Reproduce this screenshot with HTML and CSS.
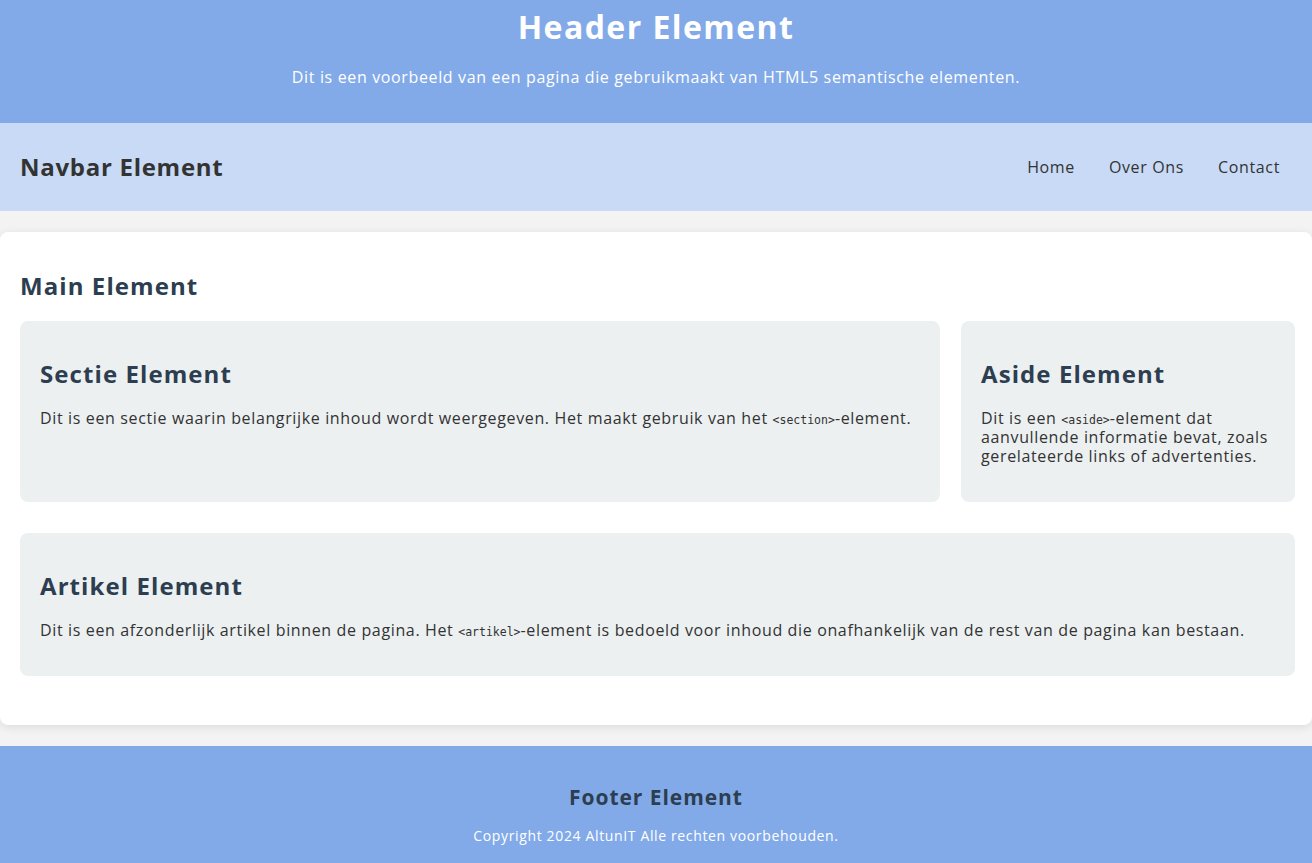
FILE: index.html
```html
<!DOCTYPE html>
<html lang="nl">
<head>
<meta charset="utf-8">
<title>HTML5 Semantische Elementen</title>
<link rel="stylesheet" href="styles.css">
</head>
<body>
<header class="site-header">
  <h1 class="site-title">Header Element</h1>
  <p class="site-intro">Dit is een voorbeeld van een pagina die gebruikmaakt van HTML5 semantische elementen.</p>
</header>
<nav class="navbar">
  <h2 class="navbar-title">Navbar Element</h2>
  <ul class="nav-links">
    <li><a href="#" class="nav-link">Home</a></li>
    <li><a href="#" class="nav-link">Over Ons</a></li>
    <li><a href="#" class="nav-link">Contact</a></li>
  </ul>
</nav>
<main class="main">
  <h2 class="main-title">Main Element</h2>
  <div class="row">
    <section class="box box-section">
      <h2 class="box-title">Sectie Element</h2>
      <p class="box-text">Dit is een sectie waarin belangrijke inhoud wordt weergegeven. Het maakt gebruik van het <code class="code">&lt;section&gt;</code>-element.</p>
    </section>
    <aside class="box box-aside">
      <h2 class="box-title">Aside Element</h2>
      <p class="box-text">Dit is een <code class="code">&lt;aside&gt;</code>-element dat aanvullende informatie bevat, zoals gerelateerde links of advertenties.</p>
    </aside>
  </div>
  <article class="box box-article">
    <h2 class="box-title">Artikel Element</h2>
    <p class="box-text">Dit is een afzonderlijk artikel binnen de pagina. Het <code class="code">&lt;artikel&gt;</code>-element is bedoeld voor inhoud die onafhankelijk van de rest van de pagina kan bestaan.</p>
  </article>
</main>
<footer class="site-footer">
  <h3 class="footer-title">Footer Element</h3>
  <p class="footer-text">Copyright 2024 AltunIT Alle rechten voorbehouden.</p>
</footer>
</body>
</html>
```
FILE: styles.css
```css
* { box-sizing: border-box; }

body {
  margin: 0;
  background: #f3f3f3;
  font-family: "Open Sans", "DejaVu Sans", sans-serif;
  letter-spacing: 0.04em;
  color: #333;
}

h1, h2, h3 { letter-spacing: 0.045em; }

.site-header {
  background: #82aae8;
  color: #fff;
  text-align: center;
  padding: 7px 20px 22px;
}
.site-title {
  margin: 0;
  font-size: 32px;
  line-height: 39px;
  font-weight: 700;
}
.site-intro {
  margin: 22px 0 14px;
  font-size: 16px;
  line-height: 19px;
}

.navbar {
  background: #c8daf5;
  display: flex;
  align-items: center;
  justify-content: space-between;
  padding: 30px 20px;
}
.navbar-title {
  margin: 0;
  font-size: 24px;
  line-height: 28px;
  font-weight: 700;
  letter-spacing: 0.03em;
  color: #333;
}
.nav-links {
  list-style: none;
  margin: 0 12px 0 0;
  padding: 0;
  display: flex;
  gap: 34px;
}
.nav-link {
  color: #333;
  text-decoration: none;
  font-size: 16px;
}

.main {
  background: #fff;
  margin: 21px 0;
  padding: 20px 17px 49px 20px;
  border-radius: 8px;
  box-shadow: 0 2px 10px rgba(0,0,0,0.1);
}
.main-title {
  margin: 19px 0 21px;
  font-size: 24px;
  line-height: 29px;
  color: #2c3e50;
}
.row {
  display: flex;
  gap: 21px;
  margin-bottom: 31px;
}
.box {
  background: #ecf0f1;
  border-radius: 8px;
  padding: 20px;
}
.box-section { flex: 1; }
.box-aside { width: 334px; }
.box-title {
  margin: 18px 0 21px;
  font-size: 24px;
  line-height: 29px;
  color: #2c3e50;
}
.box-text {
  margin: 0 0 16px;
  font-size: 16px;
  line-height: 19px;
  color: #333;
}
.code {
  font-family: "DejaVu Sans Mono", monospace;
  font-size: 11.5px;
  line-height: 1;
  letter-spacing: 0;
}

.site-footer {
  background: #82aae8;
  text-align: center;
  padding: 20px 20px 24px;
}
.footer-title {
  margin: 19px 0 18px;
  font-size: 21px;
  line-height: 24px;
  color: #2c3e50;
}
.footer-text {
  margin: 0;
  font-size: 14px;
  line-height: 17px;
  color: #fff;
}
```
